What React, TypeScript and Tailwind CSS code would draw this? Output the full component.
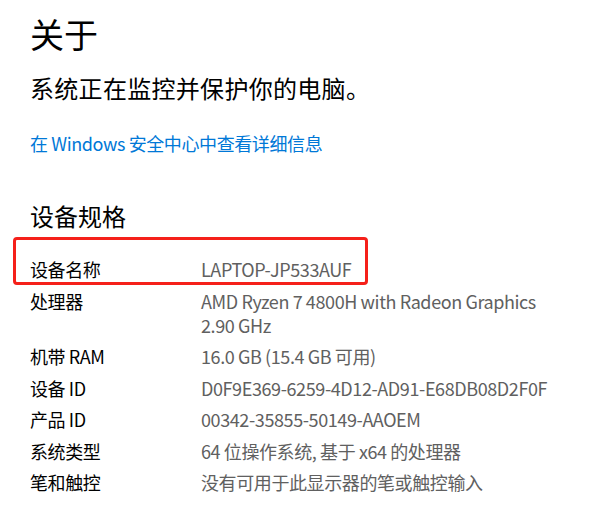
import React from 'react'

const specs: { label: string; value: string[] }[] = [
  { label: '设备名称', value: ['LAPTOP-JP533AUF'] },
  { label: '处理器', value: ['AMD Ryzen 7 4800H with Radeon Graphics', '2.90 GHz'] },
  { label: '机带 RAM', value: ['16.0 GB (15.4 GB 可用)'] },
  { label: '设备 ID', value: ['D0F9E369-6259-4D12-AD91-E68DB08D2F0F'] },
  { label: '产品 ID', value: ['00342-35855-50149-AAOEM'] },
  { label: '系统类型', value: ['64 位操作系统, 基于 x64 的处理器'] },
  { label: '笔和触控', value: ['没有可用于此显示器的笔或触控输入'] },
]

const App = () => {
  return (
    <div
      className="relative w-[594px] h-[510px] overflow-hidden bg-white pl-[30px] pt-[14px] text-black"
      style={{ fontFamily: '"Noto Sans CJK SC", "Noto Sans", sans-serif' }}
    >
      <h1 className="text-[34px] leading-[40px]">关于</h1>
      <p className="mt-[18px] text-[24px] leading-[32px] tracking-[0.3px]">系统正在监控并保护你的电脑。</p>
      <a className="mt-[27px] block text-[18px] leading-[24px] tracking-[-0.4px] text-[#0078d7]">
        在 Windows 安全中心中查看详细信息
      </a>
      <h2 className="mt-[45px] text-[24px] leading-[32px]">设备规格</h2>

      <div className="mt-[25px] flex flex-col gap-[7.5px] text-[18px] leading-[24px] tracking-[-0.4px]">
        {specs.map(row => (
          <div key={row.label} className="flex">
            <div className="w-[171px] shrink-0">{row.label}</div>
            <div className="text-[#606060]">
              {row.value.map(line => (
                <div key={line}>{line}</div>
              ))}
            </div>
          </div>
        ))}
      </div>

      {/* red highlight box drawn over the device name row */}
      <div className="absolute left-[13px] top-[237px] h-[48px] w-[355px] rounded-[4px] border-[3px] border-[#f5201a]" />
    </div>
  )
}

export default App
